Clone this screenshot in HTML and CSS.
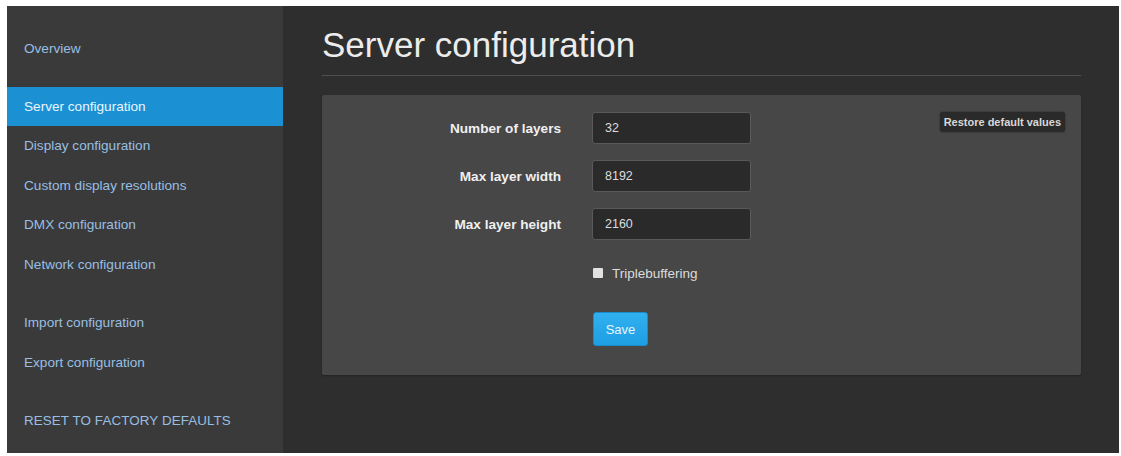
FILE: index.html
```html
<!DOCTYPE html>
<html>
<head>
<meta charset="utf-8">
<link rel="stylesheet" href="styles.css">
</head>
<body>
<div class="frame">
  <nav class="sidebar">
    <ul class="nav-group first">
      <li class="nav-item">Overview</li>
    </ul>
    <ul class="nav-group">
      <li class="nav-item active">Server configuration</li>
      <li class="nav-item">Display configuration</li>
      <li class="nav-item">Custom display resolutions</li>
      <li class="nav-item">DMX configuration</li>
      <li class="nav-item">Network configuration</li>
    </ul>
    <ul class="nav-group">
      <li class="nav-item">Import configuration</li>
      <li class="nav-item">Export configuration</li>
    </ul>
    <ul class="nav-group">
      <li class="nav-item upper">RESET TO FACTORY DEFAULTS</li>
    </ul>
  </nav>
  <main class="main">
    <h1 class="title">Server configuration</h1>
    <section class="panel">
      <form class="form">
        <label class="label">Number of layers</label>
        <input class="field" type="text" value="32">
        <button type="button" class="restore">Restore default values</button>
        <label class="label">Max layer width</label>
        <input class="field" type="text" value="8192">
        <span></span>
        <label class="label">Max layer height</label>
        <input class="field" type="text" value="2160">
        <span></span>
        <span></span>
        <label class="check-row"><input class="check" type="checkbox"> Triplebuffering</label>
        <span></span>
        <span></span>
        <div class="save-row"><button type="button" class="save">Save</button></div>
      </form>
    </section>
  </main>
</div>
</body>
</html>
```

FILE: styles.css
```css
html, body {
  margin: 0;
  padding: 0;
  background: #ffffff;
}
body {
  padding: 6px 2px 3px 7px;
  font-family: "Liberation Sans", Arial, sans-serif;
}
.frame {
  display: flex;
  height: 447px;
  background: #2e2e2e;
}
.sidebar {
  width: 276px;
  flex: 0 0 276px;
  background: #3a3a3a;
  padding-top: 23px;
  box-sizing: border-box;
}
.nav-group {
  list-style: none;
  margin: 19px 0 0 0;
  padding: 0;
}
.nav-group.first {
  margin-top: 0;
  margin-bottom: -1px;
}
.nav-item {
  padding: 10px 0 10px 17px;
  line-height: 19.5px;
  font-size: 13.6px;
  color: #98bfe2;
  white-space: nowrap;
}
.nav-item.active {
  background: #1b91d3;
  color: #eaf5ff;
}
.nav-item.upper {
  font-size: 13.4px;
  letter-spacing: 0.1px;
}
.main {
  flex: 1;
  padding: 19px 38px 0 39px;
  min-width: 0;
}
.title {
  margin: 0;
  font-size: 35px;
  font-weight: normal;
  line-height: 40px;
  color: #ececec;
  padding-bottom: 10px;
  border-bottom: 1px solid #505050;
}
.panel {
  margin-top: 19px;
  background: #474747;
  border-radius: 2px;
  height: 280px;
  box-sizing: border-box;
  padding: 17px 16px 0 0;
  box-shadow: 0 1px 2px rgba(0,0,0,0.25);
}
.form {
  display: grid;
  grid-template-columns: 239px 159px 1fr;
  column-gap: 31px;
  row-gap: 16px;
  align-items: center;
}
.label {
  text-align: right;
  font-size: 13.6px;
  font-weight: bold;
  color: #f0f0f0;
}
.field {
  height: 32px;
  box-sizing: border-box;
  width: 159px;
  background: #2a2a2a;
  border: 1px solid #5a5a5a;
  border-radius: 3px;
  color: #dddddd;
  font-family: "Liberation Sans", Arial, sans-serif;
  font-size: 12.5px;
  padding: 0 12px;
  outline: none;
}
.restore {
  justify-self: end;
  align-self: start;
  height: 20px;
  padding: 0 4px;
  background: #2a2a2a;
  border: none;
  border-radius: 3px;
  color: #d8d8d8;
  font-family: "Liberation Sans", Arial, sans-serif;
  font-size: 11px;
  font-weight: bold;
  box-shadow: 0 0 2px rgba(0,0,0,0.5);
}
.check-row {
  display: flex;
  align-items: center;
  gap: 9px;
  height: 20px;
  margin-top: 7px;
  font-size: 13.5px;
  color: #dcdcdc;
}
.check {
  appearance: none;
  -webkit-appearance: none;
  margin: 0 0 0 1px;
  width: 10px;
  height: 10px;
  background: #e2e2e2;
  border-radius: 1px;
}
.save-row {
  margin-top: 13px;
}
.save {
  width: 55px;
  height: 34px;
  margin-left: 1px;
  background: linear-gradient(#31b0f0, #1e9ee4);
  border: 1px solid #1a8ccc;
  border-radius: 3px;
  color: #e8f6ff;
  font-family: "Liberation Sans", Arial, sans-serif;
  font-size: 13px;
}
```
